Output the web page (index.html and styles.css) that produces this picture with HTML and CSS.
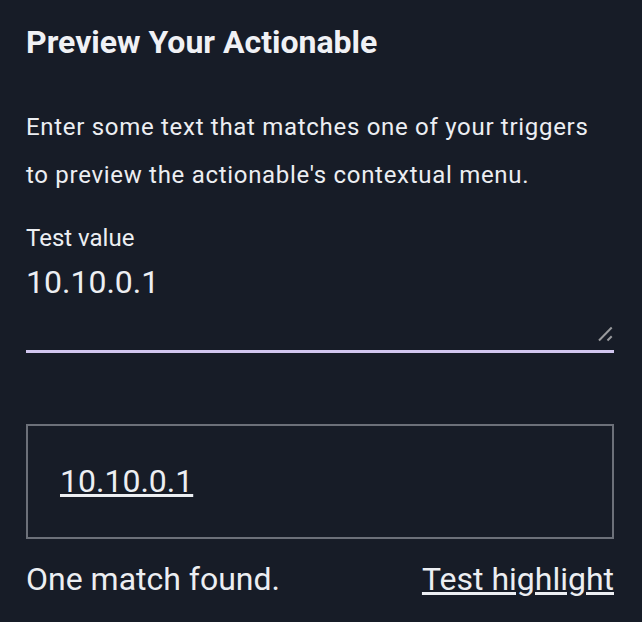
FILE: index.html
```html
<!DOCTYPE html>
<html lang="en">
<head>
<meta charset="utf-8">
<title>Preview Your Actionable</title>
<link rel="stylesheet" href="styles.css">
</head>
<body>
<main class="panel">
  <h2 class="title">Preview Your Actionable</h2>
  <p class="intro">Enter some text that matches one of your triggers to preview the actionable's contextual menu.</p>
  <label class="field-label" for="test-value">Test value</label>
  <div class="field">
    <textarea id="test-value" class="field-input">10.10.0.1</textarea>
    <svg class="resize-grip" width="16" height="16" viewBox="0 0 16 16" aria-hidden="true">
      <line x1="1" y1="14.5" x2="13.7" y2="1.5" />
      <line x1="9.5" y1="14.5" x2="13.7" y2="10.2" />
    </svg>
  </div>
  <div class="preview-box">
    <a class="match" href="#">10.10.0.1</a>
  </div>
  <div class="status-row">
    <span class="status">One match found.</span>
    <a class="test-link" href="#">Test highlight</a>
  </div>
</main>
</body>
</html>
```

FILE: styles.css
```css
html, body {
  margin: 0;
  padding: 0;
  background: #171c27;
}

body {
  font-family: Roboto, "Liberation Sans", sans-serif;
  color: #eceef2;
}

.panel {
  padding: 24px 28px 0 26px;
  display: flex;
  flex-direction: column;
}

.title {
  margin: 0;
  font-size: 32px;
  font-weight: 700;
  line-height: 36px;
  color: #f0f1f5;
}

.intro {
  margin: 44px 0 0;
  font-size: 24px;
  letter-spacing: 0.7px;
  line-height: 47.5px;
  max-width: 590px;
}

.field-label {
  margin-top: 25.5px;
  font-size: 24px;
  line-height: 26px;
}

.field {
  position: relative;
}

.field-input {
  display: block;
  box-sizing: border-box;
  width: 100%;
  height: 102.5px;
  margin: 0;
  padding: 14px 0 0;
  background: transparent;
  border: none;
  border-bottom: 3px solid #d2c6ef;
  color: #eceef2;
  font-family: Roboto, "Liberation Sans", sans-serif;
  font-size: 32px;
  line-height: 35px;
  resize: none;
  outline: none;
}

.resize-grip {
  position: absolute;
  right: 0;
  bottom: 11px;
  pointer-events: none;
  stroke: #9a9b9e;
  stroke-width: 2;
}

.preview-box {
  margin-top: 71px;
  border: 2px solid #6c7079;
  padding: 38px 32px;
  font-size: 32px;
  line-height: 35px;
}

.match {
  color: #eceef2;
  text-decoration: underline;
}

.status-row {
  margin-top: 23px;
  display: flex;
  justify-content: space-between;
  align-items: baseline;
  font-size: 32px;
  line-height: 35px;
}

.test-link {
  color: #eceef2;
  text-decoration: underline;
}
```
